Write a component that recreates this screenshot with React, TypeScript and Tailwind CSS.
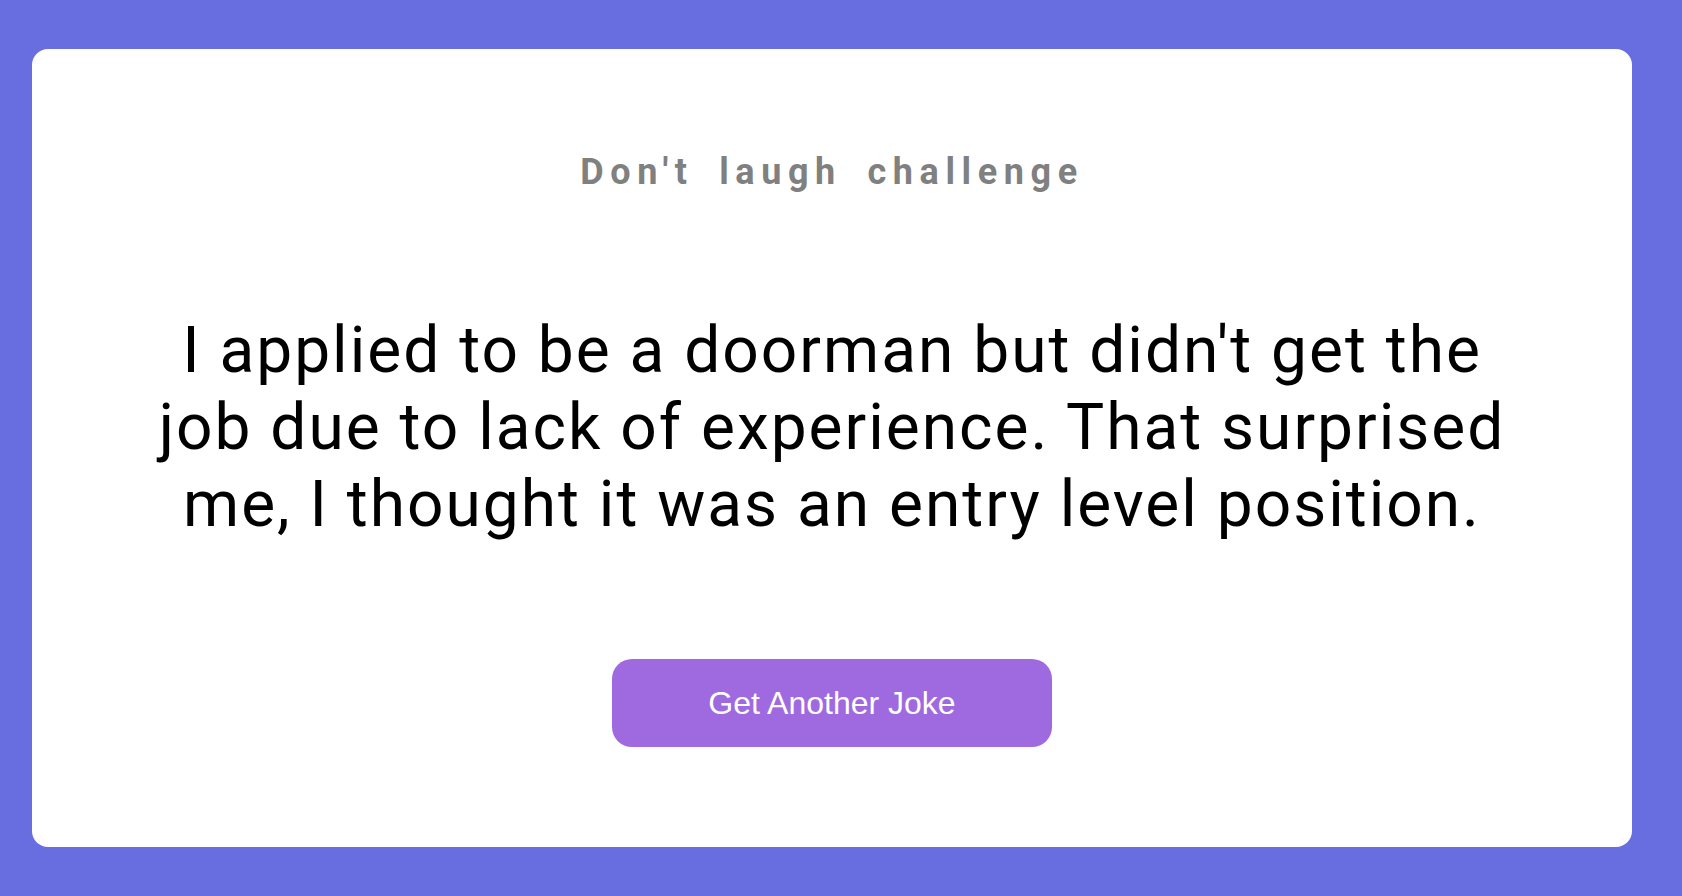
import React, { useState } from "react";

const jokes: string[] = [
    "I applied to be a doorman but didn't get the job due to lack of experience. That surprised me, I thought it was an entry level position.",
];

const App: React.FC = () => {
    const [idx, setIdx] = useState<number>(0);
    const nextJoke = (): void => {
        setIdx((prev) => (prev + 1) % jokes.length);
    };

    return (
        <div className="w-full h-screen bg-[#686de0] pl-8 py-[49px] font-['Roboto',sans-serif]">
            <div className="w-[1600px] h-full bg-white rounded-[16px] flex flex-col items-center pt-[105px]">
                <h3 className="text-[36px] leading-[36px] font-bold text-[#808080] tracking-[6.6px] [word-spacing:10px]">
                    Don't laugh challenge
                </h3>
                <p className="mt-[122px] w-[1370px] text-center text-[64px] leading-[77px] text-black tracking-[2px]">
                    {jokes[idx]}
                </p>
                <button
                    className="mt-[116px] w-[440px] h-[88px] rounded-[20px] bg-[#9f6ae0] text-white text-[32px] font-['Liberation_Sans',Arial,sans-serif] cursor-pointer"
                    onClick={nextJoke}
                >
                    Get Another Joke
                </button>
            </div>
        </div>
    );
};

export default App;
